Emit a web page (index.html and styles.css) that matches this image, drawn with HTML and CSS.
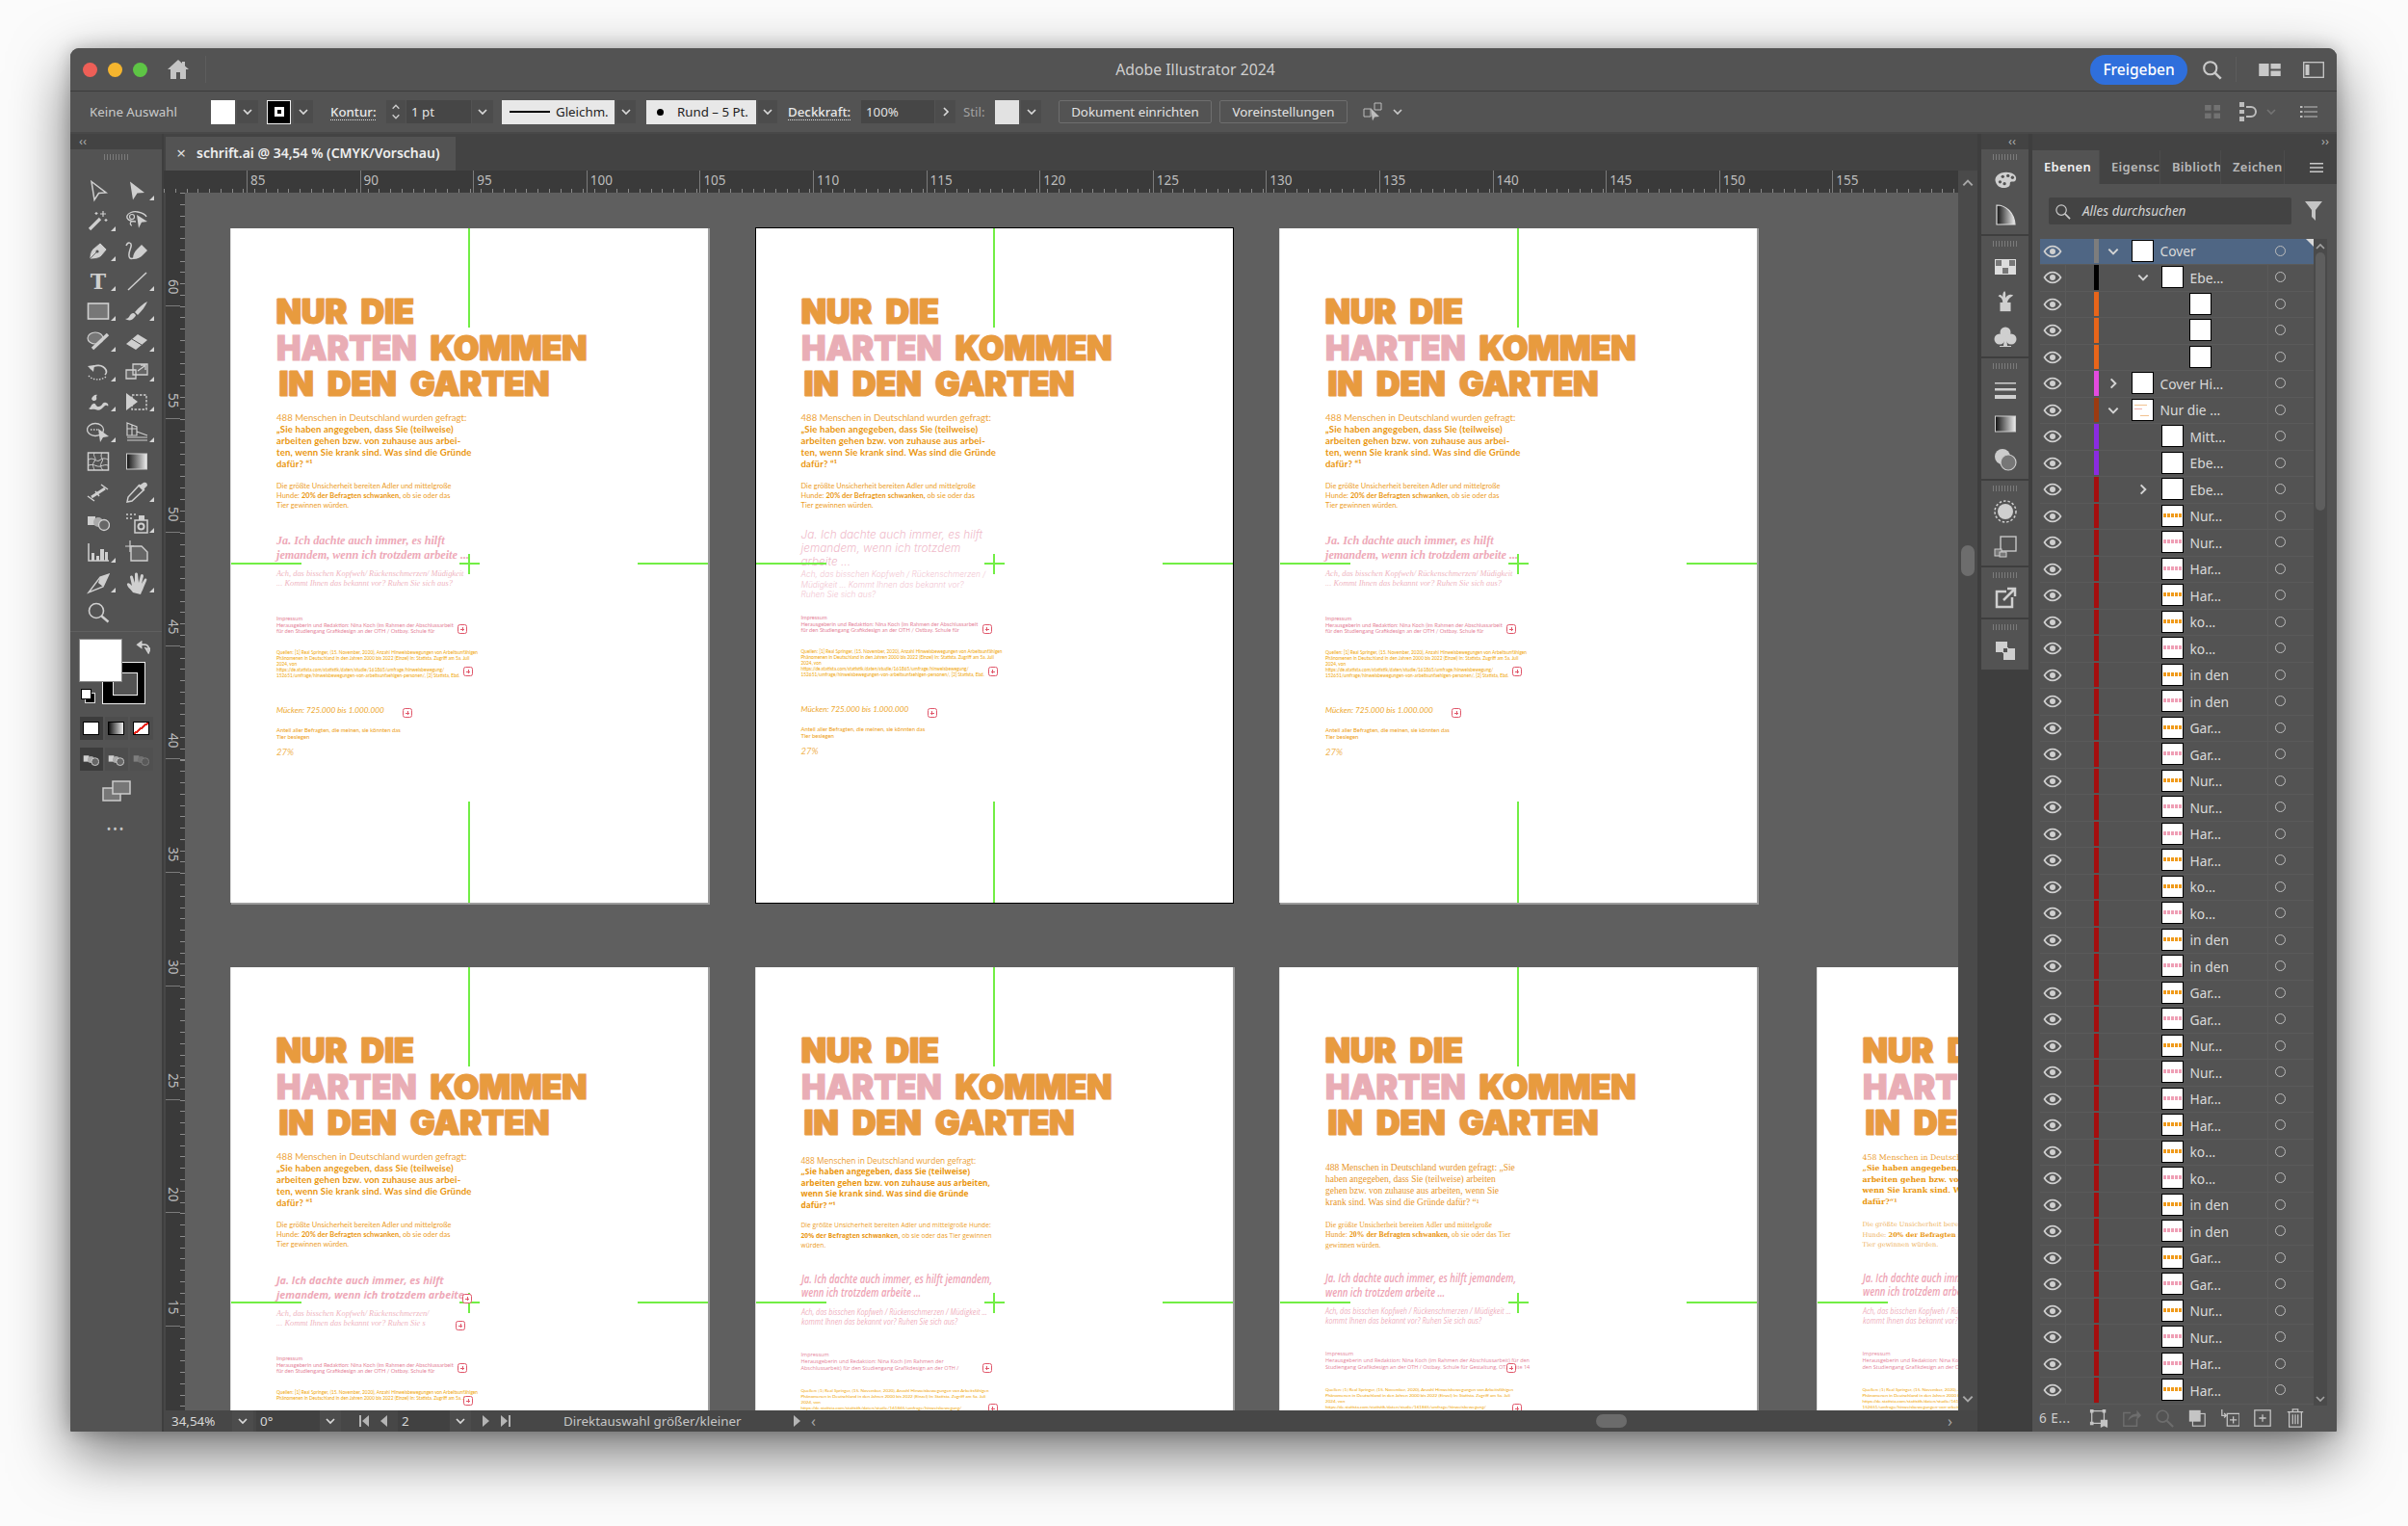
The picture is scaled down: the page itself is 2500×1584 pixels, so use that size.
FILE: index.html
```html
<!DOCTYPE html>
<html lang="de">
<head>
<meta charset="utf-8">
<title>Adobe Illustrator 2024</title>
<link rel="stylesheet" href="styles.css">
</head>
<body>
<svg class="defs" width="0" height="0" aria-hidden="true">
  <defs>
    <linearGradient id="gr"><stop offset="0" stop-color="#111"/><stop offset="1" stop-color="#eee"/></linearGradient>
    <symbol id="chev" viewBox="0 0 12 12"><path d="M2 4l4 4 4-4" fill="none" stroke="currentColor" stroke-width="1.7"/></symbol>
    <symbol id="chevr" viewBox="0 0 12 12"><path d="M4 2l4 4-4 4" fill="none" stroke="currentColor" stroke-width="1.7"/></symbol>
    <symbol id="eye" viewBox="0 0 20 14"><path d="M1.5 7C4 3 7 1.6 10 1.6S16 3 18.500 7C16 11 13 12.400 10 12.400S4 11 1.500 7z" fill="none" stroke="currentColor" stroke-width="1.7"/><circle cx="10" cy="7" r="3" fill="currentColor"/></symbol>
    <symbol id="t-sel" viewBox="0 0 24 24"><path d="M5 2.500L20 14l-7.500.5L8 21.500z" fill="none" stroke="currentColor" stroke-width="1.500"/></symbol>
    <symbol id="t-dir" viewBox="0 0 24 24"><path d="M5 2.500L20 14l-7.500.5L8 21.500z" fill="currentColor"/></symbol>
    <symbol id="t-wand" viewBox="0 0 24 24"><path d="M3 21L14 10" stroke="currentColor" stroke-width="3.200" fill="none"/><path d="M17 2v6M14 5h6M20 10v3M18.500 11.500h3M10 3v3M8.500 4.500h3" stroke="currentColor" stroke-width="1.200" fill="none"/></symbol>
    <symbol id="t-lasso" viewBox="0 0 24 24"><path d="M11 13C4 13 1 10 2 7s6-5 11-4 8 2 9 5M6 13c-1 2-1 4 1 4" fill="none" stroke="currentColor" stroke-width="1.300"/><circle cx="7" cy="8" r="2.500" fill="none" stroke="currentColor" stroke-width="1.200"/><path d="M12 6l11 7-6 .8-3 6z" fill="currentColor"/></symbol>
    <symbol id="t-pen" viewBox="0 0 24 24"><path d="M3 21c0-6 2-10 5-12l6-5 7 7-5 6c-2 3-7 4-13 4zM3 21l7-7" fill="currentColor" stroke="#535353" stroke-width=".8"/><circle cx="11" cy="13" r="1.600" fill="#535353"/></symbol>
    <symbol id="t-curv" viewBox="0 0 24 24"><path d="M1 7c2-5 6-3 5 1S2 17 5 20c2 1 4 0 5-1" fill="none" stroke="currentColor" stroke-width="1.500"/><path d="M8 21c0-5 2-8 4-10l5-5 6 6-5 5c-2 2-5 4-10 4z" fill="currentColor"/></symbol>
    <symbol id="t-line" viewBox="0 0 24 24"><path d="M3 21L22 3" stroke="currentColor" stroke-width="1.500" fill="none"/></symbol>
    <symbol id="t-rect" viewBox="0 0 24 24"><rect x="1.500" y="4" width="21" height="16" fill="#777" stroke="currentColor" stroke-width="1.600"/></symbol>
    <symbol id="t-brush" viewBox="0 0 24 24"><path d="M23 2c-4 2-9 6-13 11l3 3c4-4 8-9 10-14zM9 14c-3 0-4 2-5 4-1 1-2 2-4 2 3 2 7 2 9-1 1-1 2-2 2-3z" fill="currentColor"/></symbol>
    <symbol id="t-shaper" viewBox="0 0 24 24"><ellipse cx="9" cy="9" rx="8" ry="6" fill="#777" stroke="currentColor" stroke-width="1.200"/><path d="M6 20L22 5" stroke="currentColor" stroke-width="3.500"/></symbol>
    <symbol id="t-eraser" viewBox="0 0 24 24"><path d="M1 15L13 5l10 6-12 10z" fill="currentColor"/><path d="M7 10l10 6" stroke="#535353" stroke-width="1"/></symbol>
    <symbol id="t-rot" viewBox="0 0 24 24"><path d="M4 10c4-5 13-5 16 1 1 2 0 4-1 5" fill="none" stroke="currentColor" stroke-width="1.700"/><path d="M1 7l7-1-1 7z" fill="currentColor"/><path d="M2 17c4 5 13 5 18 1" fill="none" stroke="currentColor" stroke-width="1.400" stroke-dasharray="1.500 1.500"/></symbol>
    <symbol id="t-scale" viewBox="0 0 24 24"><path d="M8 5h15v11H8zM1 11h10v9H1z" fill="#666" stroke="currentColor" stroke-width="1.300"/><path d="M13 12l7-5M16 6h5v5" fill="none" stroke="currentColor" stroke-width="1.300"/></symbol>
    <symbol id="t-warp" viewBox="0 0 24 24"><path d="M2 19c3-1 2-4 5-5s2 4 6 3 3-5 7-4c2 .5 3 2 2 4-1-2-3-1-4 0-3 3-5 5-9 3-3-1-4 1-7-1zM5 9c1-3 4-5 6-4-2 1 0 3-1 5-2 2-4 1-5-1z" fill="currentColor"/></symbol>
    <symbol id="t-free" viewBox="0 0 24 24"><rect x="7" y="5" width="15" height="15" fill="none" stroke="currentColor" stroke-width="1.400" stroke-dasharray="2.500 1.500"/><path d="M1 3l12 9-12 9z" fill="currentColor"/></symbol>
    <symbol id="t-build" viewBox="0 0 24 24"><ellipse cx="9" cy="10" rx="8.500" ry="6.500" fill="none" stroke="currentColor" stroke-width="1.300"/><path d="M4 10h9" stroke="currentColor" stroke-width="1.300" stroke-dasharray="1.500 1.500"/><path d="M12 9l11 8-6 1-3 5z" fill="currentColor"/></symbol>
    <symbol id="t-persp" viewBox="0 0 24 24"><path d="M2 3l10 4v9H2zM2 9h10M7 5v11M12 12l11 4M2 18h21M2 21h21" fill="none" stroke="currentColor" stroke-width="1.200"/></symbol>
    <symbol id="t-mesh" viewBox="0 0 24 24"><rect x="1.500" y="3" width="21" height="18" fill="none" stroke="currentColor" stroke-width="1.500"/><path d="M8 3c-2 4 3 5 0 9s-1 5 0 9M16 3c-3 5 2 6 0 9s-2 6 1 9M2 10c5-3 8 3 11 1s5-3 9-1M2 16c6-2 8 2 12 1s5-2 8-1" fill="none" stroke="currentColor" stroke-width="1"/></symbol>
    <symbol id="t-grad" viewBox="0 0 24 24"><rect x="1.500" y="4" width="21" height="16" fill="url(#gr)" stroke="#ccc" stroke-width="1"/></symbol>
    <symbol id="t-meas" viewBox="0 0 24 24"><path d="M5 17L19 8" stroke="currentColor" stroke-width="2.800"/><path d="M1 16l7 5M15 4l7 5M9 11l4 5" stroke="currentColor" stroke-width="1.500" fill="none"/></symbol>
    <symbol id="t-drop" viewBox="0 0 24 24"><path d="M15 4l-12 13-1 5 5-1L20 9" fill="none" stroke="currentColor" stroke-width="1.500"/><path d="M13 5l6 6 1-3 3-3c0-3-2-4-4-3l-3 2z" fill="currentColor"/></symbol>
    <symbol id="t-blend" viewBox="0 0 24 24"><rect x="1" y="6" width="8" height="9" fill="currentColor"/><circle cx="12" cy="12" r="5" fill="#aaa"/><circle cx="18" cy="15" r="5.500" fill="#666" stroke="currentColor" stroke-width="1.300"/></symbol>
    <symbol id="t-spray" viewBox="0 0 24 24"><path d="M1 4h2M5 4h2M9 4h2M1 8h2M5 8h2" stroke="currentColor" stroke-width="1.600"/><path d="M10 10h13v13H10z" fill="none" stroke="currentColor" stroke-width="1.500"/><rect x="14" y="5" width="6" height="5" fill="currentColor"/><circle cx="16.500" cy="16.500" r="3" fill="none" stroke="currentColor" stroke-width="2"/></symbol>
    <symbol id="t-graph" viewBox="0 0 24 24"><path d="M2 3v18h21" fill="none" stroke="currentColor" stroke-width="1.500"/><path d="M5 13h3v8H5zM10 16h3v5h-3zM14 9h4v12h-4zM19 12h3v9h-3z" fill="currentColor"/></symbol>
    <symbol id="t-board" viewBox="0 0 24 24"><path d="M0 6h9M5 0v12" stroke="currentColor" stroke-width="1.200"/><path d="M6 6h11l6 6v9H6z" fill="#666" stroke="currentColor" stroke-width="1.400"/></symbol>
    <symbol id="t-slice" viewBox="0 0 24 24"><path d="M2 22L14 6l9-3-6 13z" fill="none" stroke="currentColor" stroke-width="1.400"/><path d="M14 6l9-3-6 13-5-4z" fill="currentColor"/></symbol>
    <symbol id="t-hand" viewBox="0 0 24 24"><path d="M8 22c-2-3-7-7-6-9s4 1 5 2L5 6c0-2 3-2 3 0l2 6V3c0-2 3-2 3 0l1 9 2-8c1-2 3-1 3 1l-2 8 3-5c2-1 3 0 2 2l-3 7c-1 3-2 4-3 7z" fill="currentColor"/></symbol>
    <symbol id="t-zoom" viewBox="0 0 24 24"><circle cx="10" cy="10" r="7.500" fill="none" stroke="currentColor" stroke-width="1.600"/><path d="M15.500 15.500l7 6" stroke="currentColor" stroke-width="2.400"/></symbol>
    <symbol id="d-pal" viewBox="0 0 26 24"><path d="M2 14C0 8 6 3 14 3c6 0 12 3 11 8-1 4-4 2-6 3s1 5-4 6c-6 2-11 0-13-6z" fill="currentColor"/><circle cx="7" cy="14" r="1.800" fill="#535353"/><circle cx="10" cy="8" r="1.800" fill="#535353"/><circle cx="16" cy="7" r="1.800" fill="#535353"/><circle cx="21" cy="9" r="1.800" fill="#535353"/><circle cx="12" cy="16" r="1.800" fill="#535353"/></symbol>
    <symbol id="d-guide" viewBox="0 0 24 24"><path d="M3 2c10 0 18 8 19 20H3z" fill="url(#gr)" stroke="#ddd" stroke-width="1.200"/></symbol>
    <symbol id="d-sw" viewBox="0 0 24 24"><rect x="1" y="4" width="22" height="16" fill="#ddd"/><path d="M2 5h6v6H2zM16 5h6v6h-6zM9 13h6v6H9z" fill="#777"/></symbol>
    <symbol id="d-br" viewBox="0 0 24 26"><path d="M6 14h12v10H6z" fill="currentColor"/><path d="M9 14C9 9 6 8 4 7c2-3 4-1 5 1 0-3 0-5 2-7 2 2 1 5 1 8 2-3 5-5 9-3-3 2-6 4-7 8z" fill="currentColor"/></symbol>
    <symbol id="d-club" viewBox="0 0 24 24"><circle cx="12" cy="7" r="5.500" fill="currentColor"/><circle cx="6" cy="14" r="5.500" fill="currentColor"/><circle cx="18" cy="14" r="5.500" fill="currentColor"/><path d="M11 12h2l1 9h4v1H6v-1h4z" fill="currentColor"/></symbol>
    <symbol id="d-stroke" viewBox="0 0 24 24"><path d="M1 5h22v1.500H1zM1 11h22v2.500H1zM1 18h22v4H1z" fill="currentColor"/></symbol>
    <symbol id="d-trans" viewBox="0 0 24 24"><circle cx="9" cy="9" r="8" fill="#ccc"/><circle cx="15" cy="15" r="8" fill="#777" stroke="#ccc" stroke-width="1.200"/></symbol>
    <symbol id="d-app" viewBox="0 0 24 24"><circle cx="12" cy="12" r="8" fill="currentColor"/><circle cx="12" cy="12" r="11" fill="none" stroke="currentColor" stroke-width="1.500" stroke-dasharray="2.500 2"/></symbol>
    <symbol id="d-style" viewBox="0 0 24 24"><rect x="7" y="2" width="16" height="15" fill="none" stroke="currentColor" stroke-width="1.300"/><rect x="1" y="15" width="7" height="7" fill="#777" stroke="currentColor"/><rect x="6" y="18" width="7" height="5" fill="#777" stroke="currentColor"/></symbol>
    <symbol id="d-exp" viewBox="0 0 24 24"><path d="M13 5H3v16h16V11" fill="none" stroke="currentColor" stroke-width="2.500"/><path d="M10 14L21 3M14 2h8v8" fill="none" stroke="currentColor" stroke-width="2.500"/></symbol>
    <symbol id="d-path" viewBox="0 0 24 24"><rect x="2" y="3" width="12" height="11" fill="currentColor"/><rect x="10" y="10" width="12" height="12" fill="currentColor"/><rect x="9.500" y="9.500" width="5" height="5" fill="#535353" stroke="#ccc"/></symbol>
  </defs>
</svg>

<main class="win">
  <header class="title">
    <i class="light red"></i><i class="light yel"></i><i class="light grn"></i>
    <svg class="home" viewBox="0 0 24 22"><path d="M12 1L1 11h3v10h6v-7h4v7h6V11h3l-4-3.600V3h-3v1.700z" fill="currentColor"/></svg>
    <i class="tdiv"></i>
    <div class="apptitle">Adobe Illustrator 2024</div>
    <button class="share">Freigeben</button>
    <svg class="ticon search" viewBox="0 0 24 24"><circle cx="10" cy="10" r="7.500" fill="none" stroke="currentColor" stroke-width="2.400"/><path d="M15.500 15.500l7 7" stroke="currentColor" stroke-width="3"/></svg>
    <i class="tdiv2"></i>
    <svg class="ticon wide" viewBox="0 0 24 16"><path d="M0 1h11v14H0zM13 1h11v6H13zM13 9h11v6H13z" fill="currentColor"/></svg>
    <svg class="ticon wide2" viewBox="0 0 22 17"><rect x=".7" y=".7" width="20.600" height="15.600" fill="none" stroke="currentColor" stroke-width="1.300"/><path d="M2.500 3h4v11h-4z" fill="currentColor"/></svg>
  </header>

  <section class="ctrl">
    <span class="lbl first">Keine Auswahl</span>
    <i class="swatch m34"></i><button class="dd m2 w22"><svg><use href="#chev"/></svg></button>
    <i class="swatch stroke-sw m9"></i><button class="dd m3 w20"><svg><use href="#chev"/></svg></button>
    <span class="lbl uline m18 w47">Kontur:</span>
    <span class="stepper m11"><svg><use href="#chev"/></svg><svg><use href="#chev"/></svg></span>
    <span class="field m1 w67">1 pt</span><button class="dd m1 w22"><svg><use href="#chev"/></svg></button>
    <span class="light-dd m9 w117"><i class="pline"></i>Gleichm.</span><button class="dd m2 w20"><svg><use href="#chev"/></svg></button>
    <span class="light-dd m11 w114"><i class="pdot"></i>Rund – 5 Pt.</span><button class="dd m2 w20"><svg><use href="#chev"/></svg></button>
    <span class="lbl uline m11 w65">Deckkraft:</span>
    <span class="field m11 w76">100%</span><button class="dd m1 w21"><svg><use href="#chevr"/></svg></button>
    <span class="lbl dim m8 w24">Stil:</span>
    <i class="swatch grey m9"></i><button class="dd m2 w21"><svg><use href="#chev"/></svg></button>
    <button class="btn m18 w159">Dokument einrichten</button>
    <button class="btn m8 w133">Voreinstellungen</button>
    <svg class="cicon m16" viewBox="0 0 20 20"><path d="M1 7h7v8H1zM12 1h7v7h-7z" fill="none" stroke="currentColor"/><path d="M8 6l9 9-5 .5-2 4z" fill="currentColor"/></svg>
    <span class="cchev m4"><svg><use href="#chev"/></svg></span>
    <svg class="cicon dimi right" viewBox="0 0 18 16"><path d="M0 0h7v6H0zM10 0h7v6h-7zM0 9h7v6H0zM10 9h7v6h-7z" fill="currentColor"/></svg>
    <svg class="cicon m18" viewBox="0 0 20 20"><path d="M1 0h5v5H1zM1 8h5v4H1zM1 15h5v5H1z" fill="currentColor"/><path d="M8 5h5a5 5 0 010 10H8" fill="none" stroke="currentColor" stroke-width="2"/></svg>
    <span class="cchev dimc m8"><svg><use href="#chev"/></svg></span>
    <svg class="cicon m24 w18" viewBox="0 0 18 16"><path d="M0 2h2.500v2H0zM0 7h2.500v2H0zM0 12h2.500v2H0zM4 2.500h14v1H4zM4 7.500h14v1H4zM4 12.500h14v1H4z" fill="currentColor"/></svg>
  </section>

  <div class="work">
    <aside class="tools">
      <div class="head"><span class="col">‹‹</span></div>
      <div class="grip"></div>
      <div class="tgrid">
        <span class="tool"><svg><use href="#t-sel"/></svg></span>
        <span class="tool fly"><svg><use href="#t-dir"/></svg></span>
        <span class="tool fly"><svg><use href="#t-wand"/></svg></span>
        <span class="tool"><svg><use href="#t-lasso"/></svg></span>
        <span class="tool fly"><svg><use href="#t-pen"/></svg></span>
        <span class="tool"><svg><use href="#t-curv"/></svg></span>
        <span class="tool fly ttype">T</span>
        <span class="tool fly"><svg><use href="#t-line"/></svg></span>
        <span class="tool fly"><svg><use href="#t-rect"/></svg></span>
        <span class="tool fly"><svg><use href="#t-brush"/></svg></span>
        <span class="tool fly"><svg><use href="#t-shaper"/></svg></span>
        <span class="tool fly"><svg><use href="#t-eraser"/></svg></span>
        <span class="tool fly"><svg><use href="#t-rot"/></svg></span>
        <span class="tool fly"><svg><use href="#t-scale"/></svg></span>
        <span class="tool fly"><svg><use href="#t-warp"/></svg></span>
        <span class="tool fly"><svg><use href="#t-free"/></svg></span>
        <span class="tool fly"><svg><use href="#t-build"/></svg></span>
        <span class="tool fly"><svg><use href="#t-persp"/></svg></span>
        <span class="tool"><svg><use href="#t-mesh"/></svg></span>
        <span class="tool"><svg><use href="#t-grad"/></svg></span>
        <span class="tool"><svg><use href="#t-meas"/></svg></span>
        <span class="tool fly"><svg><use href="#t-drop"/></svg></span>
        <span class="tool"><svg><use href="#t-blend"/></svg></span>
        <span class="tool fly"><svg><use href="#t-spray"/></svg></span>
        <span class="tool fly"><svg><use href="#t-graph"/></svg></span>
        <span class="tool"><svg><use href="#t-board"/></svg></span>
        <span class="tool fly"><svg><use href="#t-slice"/></svg></span>
        <span class="tool fly"><svg><use href="#t-hand"/></svg></span>
        <span class="tool"><svg><use href="#t-zoom"/></svg></span>
      </div>
      <div class="fs">
        <i class="fs-stroke"></i>
        <i class="fs-fill"></i>
        <svg class="fs-swap" viewBox="0 0 16 14"><path d="M2 4h8a4 4 0 014 5M2 4l4-3v6zM14 9l-3-1 3 5 2-5z" fill="none" stroke="currentColor" stroke-width="1.800"/></svg>
        <i class="fs-def"></i>
      </div>
      <div class="modes"><span class="mb on"><i class="mw"></i></span><span class="mb"><i class="mg"></i></span><span class="mb"><i class="mn"></i></span></div>
      <div class="modes draw"><span class="mb on"><svg><use href="#t-blend"/></svg></span><span class="mb"><svg><use href="#t-blend"/></svg></span><span class="mb off"><svg><use href="#t-blend"/></svg></span></div>
      <svg class="screen" viewBox="0 0 30 22"><rect x="1" y="8" width="18" height="13" fill="#777" stroke="#ccc" stroke-width="1.500"/><rect x="11" y="1" width="18" height="13" fill="#777" stroke="#ccc" stroke-width="1.500"/></svg>
      <div class="more">•••</div>
    </aside>

    <div class="doc">
      <div class="tabbar"><div class="tab"><span class="x">×</span>schrift.ai @ 34,54 % (CMYK/Vorschau)</div></div>
      <div class="docbody">
        <div class="docmain">
          <div class="hruler"><span>85</span><span>90</span><span>95</span><span>100</span><span>105</span><span>110</span><span>115</span><span>120</span><span>125</span><span>130</span><span>135</span><span>140</span><span>145</span><span>150</span><span>155</span></div>
          <div class="docrow">
            <div class="vruler"><span>60</span><span>55</span><span>50</span><span>45</span><span>40</span><span>35</span><span>30</span><span>25</span><span>20</span><span>15</span><span>10</span></div>
            <div class="canvas">

              <article class="ab fa">
                <div class="hd"><div>NUR DIE</div><div><span class="pk">HARTEN</span> KOMMEN</div><div class="in">IN DEN GARTEN</div></div>
                <p class="q">488 Menschen in Deutschland wurden gefragt:<br><b>„Sie haben angegeben, dass Sie (teilweise)<br>arbeiten gehen bzw. von zuhause aus arbei-<br>ten, wenn Sie krank sind. Was sind die Gründe<br>dafür? “¹</b></p>
                <p class="p2">Die größte Unsicherheit bereiten Adler und mittelgroße<br>Hunde: <b>20% der Befragten schwanken,</b> ob sie oder das<br>Tier gewinnen würden.</p>
                <p class="ja">Ja. Ich dachte auch immer, es hilft<br>jemandem, wenn ich trotzdem arbeite ...</p>
                <p class="ach">Ach, das bisschen Kopfweh/ Rückenschmerzen/ Müdigkeit<br>... Kommt Ihnen das bekannt vor? Ruhen Sie sich aus?</p>
                <p class="imp">Impressum<br>Herausgeberin und Redaktion: Nina Koch (im Rahmen der Abschlussarbeit<br>für den Studiengang Grafikdesign an der OTH / Ostbay. Schule für</p>
                <p class="src">Quellen: [1] Real Springer, (15. November, 2020), Anzahl Hinweisbewegungen von Arbeitsunfähigen<br>Phänomenen in Deutschland in den Jahren 2000 bis 2022 (Einzel) In: Statista. Zugriff am 5a. Juli<br>2024, von<br>https://de.statista.com/statistik/daten/studie/161865/umfrage/hinweisbewegung/<br>152651/umfrage/hinweisbewegungen-von-arbeitsunfaehigen-personen/, [2] Statista, Ebd.</p>
                <p class="mk">Mücken: 725.000 bis 1.000.000</p>
                <p class="an">Anteil aller Befragten, die meinen, sie könnten das<br>Tier besiegen</p>
                <p class="pc">27%</p>
                <i class="ov o1"></i><i class="ov o2"></i><i class="ov o3"></i>
              </article>

              <article class="ab fa active fb">
                <div class="hd"><div>NUR DIE</div><div><span class="pk">HARTEN</span> KOMMEN</div><div class="in">IN DEN GARTEN</div></div>
                <p class="q">488 Menschen in Deutschland wurden gefragt:<br><b>„Sie haben angegeben, dass Sie (teilweise)<br>arbeiten gehen bzw. von zuhause aus arbei-<br>ten, wenn Sie krank sind. Was sind die Gründe<br>dafür? “¹</b></p>
                <p class="p2">Die größte Unsicherheit bereiten Adler und mittelgroße<br>Hunde: <b>20% der Befragten schwanken,</b> ob sie oder das<br>Tier gewinnen würden.</p>
                <p class="ja">Ja. Ich dachte auch immer, es hilft<br>jemandem, wenn ich trotzdem<br>arbeite ...</p>
                <p class="ach">Ach, das bisschen Kopfweh / Rückenschmerzen /<br>Müdigkeit ... Kommt Ihnen das bekannt vor?<br>Ruhen Sie sich aus?</p>
                <p class="imp">Impressum<br>Herausgeberin und Redaktion: Nina Koch (im Rahmen der Abschlussarbeit<br>für den Studiengang Grafikdesign an der OTH / Ostbay. Schule für</p>
                <p class="src">Quellen: [1] Real Springer, (15. November, 2020), Anzahl Hinweisbewegungen von Arbeitsunfähigen<br>Phänomenen in Deutschland in den Jahren 2000 bis 2022 (Einzel) In: Statista. Zugriff am 5a. Juli<br>2024, von<br>https://de.statista.com/statistik/daten/studie/161865/umfrage/hinweisbewegung/<br>152651/umfrage/hinweisbewegungen-von-arbeitsunfaehigen-personen/, [2] Statista, Ebd.</p>
                <p class="mk">Mücken: 725.000 bis 1.000.000</p>
                <p class="an">Anteil aller Befragten, die meinen, sie könnten das<br>Tier besiegen</p>
                <p class="pc">27%</p>
                <i class="ov o1"></i><i class="ov o2"></i><i class="ov o3"></i>
              </article>

              <article class="ab fa">
                <div class="hd"><div>NUR DIE</div><div><span class="pk">HARTEN</span> KOMMEN</div><div class="in">IN DEN GARTEN</div></div>
                <p class="q">488 Menschen in Deutschland wurden gefragt:<br><b>„Sie haben angegeben, dass Sie (teilweise)<br>arbeiten gehen bzw. von zuhause aus arbei-<br>ten, wenn Sie krank sind. Was sind die Gründe<br>dafür? “¹</b></p>
                <p class="p2">Die größte Unsicherheit bereiten Adler und mittelgroße<br>Hunde: <b>20% der Befragten schwanken,</b> ob sie oder das<br>Tier gewinnen würden.</p>
                <p class="ja">Ja. Ich dachte auch immer, es hilft<br>jemandem, wenn ich trotzdem arbeite ...</p>
                <p class="ach">Ach, das bisschen Kopfweh/ Rückenschmerzen/ Müdigkeit<br>... Kommt Ihnen das bekannt vor? Ruhen Sie sich aus?</p>
                <p class="imp">Impressum<br>Herausgeberin und Redaktion: Nina Koch (im Rahmen der Abschlussarbeit<br>für den Studiengang Grafikdesign an der OTH / Ostbay. Schule für</p>
                <p class="src">Quellen: [1] Real Springer, (15. November, 2020), Anzahl Hinweisbewegungen von Arbeitsunfähigen<br>Phänomenen in Deutschland in den Jahren 2000 bis 2022 (Einzel) In: Statista. Zugriff am 5a. Juli<br>2024, von<br>https://de.statista.com/statistik/daten/studie/161865/umfrage/hinweisbewegung/<br>152651/umfrage/hinweisbewegungen-von-arbeitsunfaehigen-personen/, [2] Statista, Ebd.</p>
                <p class="mk">Mücken: 725.000 bis 1.000.000</p>
                <p class="an">Anteil aller Befragten, die meinen, sie könnten das<br>Tier besiegen</p>
                <p class="pc">27%</p>
                <i class="ov o1"></i><i class="ov o2"></i><i class="ov o3"></i>
              </article>
              <div class="spacer"></div>

              <article class="ab fa fd">
                <div class="hd"><div>NUR DIE</div><div><span class="pk">HARTEN</span> KOMMEN</div><div class="in">IN DEN GARTEN</div></div>
                <p class="q">488 Menschen in Deutschland wurden gefragt:<br><b>„Sie haben angegeben, dass Sie (teilweise)<br>arbeiten gehen bzw. von zuhause aus arbei-<br>ten, wenn Sie krank sind. Was sind die Gründe<br>dafür? “¹</b></p>
                <p class="p2">Die größte Unsicherheit bereiten Adler und mittelgroße<br>Hunde: <b>20% der Befragten schwanken,</b> ob sie oder das<br>Tier gewinnen würden.</p>
                <p class="ja">Ja. Ich dachte auch immer, es hilft<br>jemandem, wenn ich trotzdem arbeite</p>
                <p class="ach">Ach, das bisschen Kopfweh/ Rückenschmerzen/<br>... Kommt Ihnen das bekannt vor? Ruhen Sie s</p>
                <p class="imp">Impressum<br>Herausgeberin und Redaktion: Nina Koch (im Rahmen der Abschlussarbeit<br>für den Studiengang Grafikdesign an der OTH / Ostbay. Schule für</p>
                <p class="src">Quellen: [1] Real Springer, (15. November, 2020), Anzahl Hinweisbewegungen von Arbeitsunfähigen<br>Phänomenen in Deutschland in den Jahren 2000 bis 2022 (Einzel) In: Statista. Zugriff am 5a. Juli</p>
                <i class="ov o5"></i><i class="ov o6"></i><i class="ov o1"></i><i class="ov o7"></i>
              </article>

              <article class="ab fc">
                <div class="hd"><div>NUR DIE</div><div><span class="pk">HARTEN</span> KOMMEN</div><div class="in">IN DEN GARTEN</div></div>
                <p class="q">488 Menschen in Deutschland wurden gefragt:<br><b>„Sie haben angegeben, dass Sie (teilweise)<br>arbeiten gehen bzw. von zuhause aus arbeiten,<br>wenn Sie krank sind. Was sind die Gründe<br>dafür? “¹</b></p>
                <p class="p2">Die größte Unsicherheit bereiten Adler und mittelgroße Hunde:<br><b>20% der Befragten schwanken,</b> ob sie oder das Tier gewinnen<br>würden.</p>
                <p class="ja">Ja. Ich dachte auch immer, es hilft jemandem,<br>wenn ich trotzdem arbeite ...</p>
                <p class="ach">Ach, das bisschen Kopfweh / Rückenschmerzen / Müdigkeit ...<br>kommt Ihnen das bekannt vor? Ruhen Sie sich aus?</p>
                <p class="imp">Impressum<br>Herausgeberin und Redaktion: Nina Koch (im Rahmen der<br>Abschlussarbeit) für den Studiengang Grafikdesign an der OTH /</p>
                <p class="src">Quellen: [1] Real Springer, (15. November, 2020), Anzahl Hinweisbewegungen von Arbeitsfähigen<br>Phänomenen in Deutschland in den Jahren 2000 bis 2022 (Einzel) In: Statista. Zugriff am 5a. Juli<br>2024, von<br>https://de.statista.com/statistik/daten/studie/161865/umfrage/hinweisbewegung/</p>
                <i class="ov o1"></i><i class="ov o4"></i>
              </article>

              <article class="ab fe">
                <div class="hd"><div>NUR DIE</div><div><span class="pk">HARTEN</span> KOMMEN</div><div class="in">IN DEN GARTEN</div></div>
                <p class="q">488 Menschen in Deutschland wurden gefragt: „Sie<br>haben angegeben, dass Sie (teilweise) arbeiten<br>gehen bzw. von zuhause aus arbeiten, wenn Sie<br>krank sind. Was sind die Gründe dafür? “¹</p>
                <p class="p2">Die größte Unsicherheit bereiten Adler und mittelgroße<br>Hunde: <b>20% der Befragten schwanken,</b> ob sie oder das Tier<br>gewinnen würden.</p>
                <p class="ja">Ja. Ich dachte auch immer, es hilft jemandem,<br>wenn ich trotzdem arbeite ...</p>
                <p class="ach">Ach, das bisschen Kopfweh / Rückenschmerzen / Müdigkeit ...<br>kommt Ihnen das bekannt vor? Ruhen Sie sich aus?</p>
                <p class="imp">Impressum<br>Herausgeberin und Redaktion: Nina Koch (im Rahmen der Abschlussarbeit) für den<br>Studiengang Grafikdesign an der OTH / Ostbay. Schule für Gestaltung, OTZ Seite 14</p>
                <p class="src">Quellen: [1] Real Springer, (15. November, 2020), Anzahl Hinweisbewegungen von Arbeitsfähigen<br>Phänomenen in Deutschland in den Jahren 2000 bis 2022 (Einzel) In: Statista. Zugriff am 5a. Juli<br>2024, von<br>https://de.statista.com/statistik/daten/studie/161865/umfrage/hinweisbewegung/</p>
                <i class="ov o1"></i><i class="ov o4"></i>
              </article>

              <article class="ab fg shift">
                <div class="hd"><div>NUR DIE</div><div><span class="pk">HARTEN</span> KOMMEN</div><div class="in">IN DEN GARTEN</div></div>
                <p class="q">458 Menschen in Deutschland wurden gefragt:<br><b>„Sie haben angegeben, dass Sie (teilweise)<br>arbeiten gehen bzw. von zuhause aus arbeiten,<br>wenn Sie krank sind. Was sind die Gründe<br>dafür?“¹</b></p>
                <p class="p2">Die größte Unsicherheit bereiten Adler und mittelgroße<br>Hunde: <b>20% der Befragten schwanken,</b> ob sie oder das<br>Tier gewinnen würden.</p>
                <p class="ja">Ja. Ich dachte auch immer, es hilft jemandem,<br>wenn ich trotzdem arbeite ...</p>
                <p class="ach">Ach, das bisschen Kopfweh / Rückenschmerzen / Müdigkeit ...<br>kommt Ihnen das bekannt vor? Ruhen Sie sich aus?</p>
                <p class="imp">Impressum<br>Herausgeberin und Redaktion: Nina Koch (im Rahmen der Abschlussarbeit)<br>den Studiengang Grafikdesign an der OTH / Ostbay. Schule für Gestaltung</p>
                <p class="src">Quellen: [1] Real Springer, (15. November, 2020), Anzahl Hinweisbewegungen von Arbeitsfähigen<br>Phänomenen in Deutschland in den Jahren 2000 bis 2022 (Einzel) In: Statista. Zugriff am 5a. Juli<br>https://de.statista.com/statistik/daten/studie/161865/umfrage/hinweisbewegung/<br>152651/umfrage/hinweisbewegungen-von-arbeitsunfaehigen-personen/</p>
              </article>

            </div>
          </div>
        </div>
        <div class="vscroll">
          <svg class="sa"><use href="#chev" transform="rotate(180 7 7)"/></svg>
          <i class="vthumb"></i>
          <svg class="sa sb"><use href="#chev"/></svg>
        </div>
      </div>
      <footer class="status">
        <span class="sval w-z">34,54%</span><button class="dd s-dd"><svg><use href="#chev"/></svg></button>
        <span class="sfield w-a">0°</span><button class="dd s-dd"><svg><use href="#chev"/></svg></button>
        <svg class="nav first-n" viewBox="0 0 12 14"><path d="M1 1h2v12H1zM11 1v12L4 7z" fill="currentColor"/></svg>
        <svg class="nav" viewBox="0 0 12 14"><path d="M9 1v12L2 7z" fill="currentColor"/></svg>
        <span class="sfield w-n">2</span><button class="dd s-dd"><svg><use href="#chev"/></svg></button>
        <svg class="nav" viewBox="0 0 12 14"><path d="M3 1v12l7-6z" fill="currentColor"/></svg>
        <svg class="nav" viewBox="0 0 12 14"><path d="M1 1v12l7-6zM9 1h2v12H9z" fill="currentColor"/></svg>
        <span class="stext">Direktauswahl größer/kleiner</span>
        <svg class="nav m-sa" viewBox="0 0 12 14"><path d="M3 1v12l7-6z" fill="currentColor"/></svg>
        <div class="hscroll"><span class="ha">‹</span><i class="hthumb"></i><span class="ha">›</span></div>
      </footer>
    </div>

    <aside class="dock">
      <div class="head right-h"><span class="col">‹‹</span></div>
      <div class="dgroup g1"><div class="grip"></div><svg class="dic"><use href="#d-pal"/></svg><svg class="dic"><use href="#d-guide"/></svg></div>
      <div class="dgroup g2"><div class="grip"></div><svg class="dic"><use href="#d-sw"/></svg><svg class="dic"><use href="#d-br"/></svg><svg class="dic"><use href="#d-club"/></svg></div>
      <div class="dgroup g2"><div class="grip"></div><svg class="dic"><use href="#d-stroke"/></svg><svg class="dic"><use href="#t-grad"/></svg><svg class="dic"><use href="#d-trans"/></svg></div>
      <div class="dgroup g3"><div class="grip"></div><svg class="dic"><use href="#d-app"/></svg><svg class="dic"><use href="#d-style"/></svg></div>
      <div class="dgroup g4"><div class="grip"></div><svg class="dic"><use href="#d-exp"/></svg></div>
      <div class="dgroup g4"><div class="grip"></div><svg class="dic"><use href="#d-path"/></svg></div>
    </aside>

    <aside class="panel">
      <div class="head ph"><span class="col">››</span></div>
      <div class="ptabs">
        <span class="ptab on">Ebenen</span><span class="ptab">Eigensc</span><span class="ptab">Biblioth</span><span class="ptab clip">Zeichen</span>
        <svg class="pmenu" viewBox="0 0 14 10"><path d="M0 0h14v1.500H0zM0 4.200h14v1.500H0zM0 8.500h14V10H0z" fill="currentColor"/></svg>
      </div>
      <div class="psearch">
        <div class="sbox"><svg viewBox="0 0 18 18"><circle cx="7.500" cy="7.500" r="5.500" fill="none" stroke="currentColor" stroke-width="1.300"/><path d="M11.500 11.500l5.500 5.500" stroke="currentColor" stroke-width="1.800"/></svg><em>Alles durchsuchen</em></div>
        <svg class="filter" viewBox="0 0 18 20"><path d="M0 0h18l-7 9v11l-4-4V9z" fill="currentColor"/></svg>
      </div>
      <div class="layers">
        <ul class="list">
          <li class="row sel"><svg class="eye"><use href="#eye"/></svg><i class="bar grey"></i><span class="ct l0"><svg class="tw"><use href="#chev"/></svg><b class="th"></b>Cover</span><i class="tg"></i></li>
          <li class="row"><svg class="eye"><use href="#eye"/></svg><i class="bar blk"></i><span class="ct l1"><svg class="tw"><use href="#chev"/></svg><b class="th"></b>Ebe...</span><i class="tg"></i></li>
          <li class="row"><svg class="eye"><use href="#eye"/></svg><i class="bar org"></i><span class="ct l2"><i class="tw"></i><b class="th"></b></span><i class="tg"></i></li>
          <li class="row"><svg class="eye"><use href="#eye"/></svg><i class="bar org"></i><span class="ct l2"><i class="tw"></i><b class="th"></b></span><i class="tg"></i></li>
          <li class="row"><svg class="eye"><use href="#eye"/></svg><i class="bar org"></i><span class="ct l2"><i class="tw"></i><b class="th"></b></span><i class="tg"></i></li>
          <li class="row"><svg class="eye"><use href="#eye"/></svg><i class="bar mag"></i><span class="ct l0"><svg class="tw"><use href="#chevr"/></svg><b class="th"></b>Cover Hi...</span><i class="tg"></i></li>
          <li class="row"><svg class="eye"><use href="#eye"/></svg><i class="bar brn"></i><span class="ct l0"><svg class="tw"><use href="#chev"/></svg><b class="th m"></b>Nur die ...</span><i class="tg"></i></li>
          <li class="row"><svg class="eye"><use href="#eye"/></svg><i class="bar pur"></i><span class="ct l1"><i class="tw"></i><b class="th"></b>Mitt...</span><i class="tg"></i></li>
          <li class="row"><svg class="eye"><use href="#eye"/></svg><i class="bar pur"></i><span class="ct l1"><i class="tw"></i><b class="th"></b>Ebe...</span><i class="tg"></i></li>
          <li class="row"><svg class="eye"><use href="#eye"/></svg><i class="bar red"></i><span class="ct l1"><svg class="tw"><use href="#chevr"/></svg><b class="th"></b>Ebe...</span><i class="tg"></i></li>
          <li class="row"><svg class="eye"><use href="#eye"/></svg><i class="bar red"></i><span class="ct l1"><i class="tw"></i><b class="th o"></b>Nur...</span><i class="tg"></i></li>
          <li class="row"><svg class="eye"><use href="#eye"/></svg><i class="bar red"></i><span class="ct l1"><i class="tw"></i><b class="th p"></b>Nur...</span><i class="tg"></i></li>
          <li class="row"><svg class="eye"><use href="#eye"/></svg><i class="bar red"></i><span class="ct l1"><i class="tw"></i><b class="th p"></b>Har...</span><i class="tg"></i></li>
          <li class="row"><svg class="eye"><use href="#eye"/></svg><i class="bar red"></i><span class="ct l1"><i class="tw"></i><b class="th o"></b>Har...</span><i class="tg"></i></li>
          <li class="row"><svg class="eye"><use href="#eye"/></svg><i class="bar red"></i><span class="ct l1"><i class="tw"></i><b class="th o"></b>ko...</span><i class="tg"></i></li>
          <li class="row"><svg class="eye"><use href="#eye"/></svg><i class="bar red"></i><span class="ct l1"><i class="tw"></i><b class="th p"></b>ko...</span><i class="tg"></i></li>
          <li class="row"><svg class="eye"><use href="#eye"/></svg><i class="bar red"></i><span class="ct l1"><i class="tw"></i><b class="th o"></b>in den</span><i class="tg"></i></li>
          <li class="row"><svg class="eye"><use href="#eye"/></svg><i class="bar red"></i><span class="ct l1"><i class="tw"></i><b class="th p"></b>in den</span><i class="tg"></i></li>
          <li class="row"><svg class="eye"><use href="#eye"/></svg><i class="bar red"></i><span class="ct l1"><i class="tw"></i><b class="th o"></b>Gar...</span><i class="tg"></i></li>
          <li class="row"><svg class="eye"><use href="#eye"/></svg><i class="bar red"></i><span class="ct l1"><i class="tw"></i><b class="th p"></b>Gar...</span><i class="tg"></i></li>
          <li class="row"><svg class="eye"><use href="#eye"/></svg><i class="bar red"></i><span class="ct l1"><i class="tw"></i><b class="th o"></b>Nur...</span><i class="tg"></i></li>
          <li class="row"><svg class="eye"><use href="#eye"/></svg><i class="bar red"></i><span class="ct l1"><i class="tw"></i><b class="th p"></b>Nur...</span><i class="tg"></i></li>
          <li class="row"><svg class="eye"><use href="#eye"/></svg><i class="bar red"></i><span class="ct l1"><i class="tw"></i><b class="th p"></b>Har...</span><i class="tg"></i></li>
          <li class="row"><svg class="eye"><use href="#eye"/></svg><i class="bar red"></i><span class="ct l1"><i class="tw"></i><b class="th o"></b>Har...</span><i class="tg"></i></li>
          <li class="row"><svg class="eye"><use href="#eye"/></svg><i class="bar red"></i><span class="ct l1"><i class="tw"></i><b class="th o"></b>ko...</span><i class="tg"></i></li>
          <li class="row"><svg class="eye"><use href="#eye"/></svg><i class="bar red"></i><span class="ct l1"><i class="tw"></i><b class="th p"></b>ko...</span><i class="tg"></i></li>
          <li class="row"><svg class="eye"><use href="#eye"/></svg><i class="bar red"></i><span class="ct l1"><i class="tw"></i><b class="th o"></b>in den</span><i class="tg"></i></li>
          <li class="row"><svg class="eye"><use href="#eye"/></svg><i class="bar red"></i><span class="ct l1"><i class="tw"></i><b class="th p"></b>in den</span><i class="tg"></i></li>
          <li class="row"><svg class="eye"><use href="#eye"/></svg><i class="bar red"></i><span class="ct l1"><i class="tw"></i><b class="th o"></b>Gar...</span><i class="tg"></i></li>
          <li class="row"><svg class="eye"><use href="#eye"/></svg><i class="bar red"></i><span class="ct l1"><i class="tw"></i><b class="th p"></b>Gar...</span><i class="tg"></i></li>
          <li class="row"><svg class="eye"><use href="#eye"/></svg><i class="bar red"></i><span class="ct l1"><i class="tw"></i><b class="th o"></b>Nur...</span><i class="tg"></i></li>
          <li class="row"><svg class="eye"><use href="#eye"/></svg><i class="bar red"></i><span class="ct l1"><i class="tw"></i><b class="th p"></b>Nur...</span><i class="tg"></i></li>
          <li class="row"><svg class="eye"><use href="#eye"/></svg><i class="bar red"></i><span class="ct l1"><i class="tw"></i><b class="th p"></b>Har...</span><i class="tg"></i></li>
          <li class="row"><svg class="eye"><use href="#eye"/></svg><i class="bar red"></i><span class="ct l1"><i class="tw"></i><b class="th o"></b>Har...</span><i class="tg"></i></li>
          <li class="row"><svg class="eye"><use href="#eye"/></svg><i class="bar red"></i><span class="ct l1"><i class="tw"></i><b class="th o"></b>ko...</span><i class="tg"></i></li>
          <li class="row"><svg class="eye"><use href="#eye"/></svg><i class="bar red"></i><span class="ct l1"><i class="tw"></i><b class="th p"></b>ko...</span><i class="tg"></i></li>
          <li class="row"><svg class="eye"><use href="#eye"/></svg><i class="bar red"></i><span class="ct l1"><i class="tw"></i><b class="th o"></b>in den</span><i class="tg"></i></li>
          <li class="row"><svg class="eye"><use href="#eye"/></svg><i class="bar red"></i><span class="ct l1"><i class="tw"></i><b class="th p"></b>in den</span><i class="tg"></i></li>
          <li class="row"><svg class="eye"><use href="#eye"/></svg><i class="bar red"></i><span class="ct l1"><i class="tw"></i><b class="th o"></b>Gar...</span><i class="tg"></i></li>
          <li class="row"><svg class="eye"><use href="#eye"/></svg><i class="bar red"></i><span class="ct l1"><i class="tw"></i><b class="th p"></b>Gar...</span><i class="tg"></i></li>
          <li class="row"><svg class="eye"><use href="#eye"/></svg><i class="bar red"></i><span class="ct l1"><i class="tw"></i><b class="th o"></b>Nur...</span><i class="tg"></i></li>
          <li class="row"><svg class="eye"><use href="#eye"/></svg><i class="bar red"></i><span class="ct l1"><i class="tw"></i><b class="th p"></b>Nur...</span><i class="tg"></i></li>
          <li class="row"><svg class="eye"><use href="#eye"/></svg><i class="bar red"></i><span class="ct l1"><i class="tw"></i><b class="th p"></b>Har...</span><i class="tg"></i></li>
          <li class="row"><svg class="eye"><use href="#eye"/></svg><i class="bar red"></i><span class="ct l1"><i class="tw"></i><b class="th o"></b>Har...</span><i class="tg"></i></li>
        </ul>
        <div class="lscroll"><svg class="sa"><use href="#chev" transform="rotate(180 7 7)"/></svg><i class="lthumb"></i><svg class="sa sb"><use href="#chev"/></svg></div>
      </div>
      <div class="pfoot">
        <span class="count">6 E...</span>
        <svg class="fi f1" viewBox="0 0 22 22"><path d="M3 3h14v14H3z" fill="none" stroke="currentColor" stroke-width="1.400"/><path d="M1 1h4v4H1zM15 1h4v4h-4zM1 15h4v4H1z" fill="currentColor"/><path d="M13 13h8v9l-4-2-4 2z" fill="currentColor"/></svg>
        <svg class="fi dim" viewBox="0 0 22 22"><path d="M10 5H2v15h15v-8" fill="none" stroke="currentColor" stroke-width="1.600"/><path d="M7 14c1-5 5-8 10-8V2l5 6-5 5V9c-4 0-8 2-10 5z" fill="currentColor"/></svg>
        <svg class="fi dim" viewBox="0 0 22 22"><circle cx="9" cy="9" r="6.500" fill="none" stroke="currentColor" stroke-width="1.800"/><path d="M14 14l7 7" stroke="currentColor" stroke-width="2.400"/></svg>
        <svg class="fi" viewBox="0 0 22 22"><rect x="6" y="6" width="14" height="14" fill="none" stroke="currentColor" stroke-width="1.300"/><rect x="2" y="2" width="13" height="13" fill="currentColor"/></svg>
        <svg class="fi" viewBox="0 0 22 22"><path d="M8 6h14v14H8z" fill="none" stroke="currentColor" stroke-width="1.400"/><path d="M15 9v8M11 13h8M2 1v7h5M4.500 5.500L7 8 4.500 10.500" fill="none" stroke="currentColor" stroke-width="1.400"/></svg>
        <svg class="fi" viewBox="0 0 22 22"><rect x="2" y="2" width="18" height="18" fill="none" stroke="currentColor" stroke-width="1.400"/><path d="M11 7v8M7 11h8" stroke="currentColor" stroke-width="1.400"/></svg>
        <svg class="fi" viewBox="0 0 22 22"><path d="M2 4h18M8 4V1h6v3M4 4h14v17H4zM8 7v11M11 7v11M14 7v11" fill="none" stroke="currentColor" stroke-width="1.400"/></svg>
      </div>
    </aside>
  </div>
</main>
</body>
</html>
```

FILE: styles.css
```css
* { box-sizing: border-box; }
html, body { margin: 0; padding: 0; }
body { width: 2500px; height: 1584px; background: #fbfbfb; padding: 50px 74px 98px 73px; overflow: hidden; font-family: "Noto Sans", "Open Sans", sans-serif; color: #d4d4d4; }
.defs { position: absolute; width: 0; height: 0; }
button { font: inherit; color: inherit; border: 0; background: none; padding: 0; }
p { margin: 0; }
ul { margin: 0; padding: 0; list-style: none; }
i { display: block; font-style: normal; }

.win { width: 2353px; height: 1436px; background: #535353; border-radius: 9px 9px 2px 2px; box-shadow: 0 22px 62px rgba(0,0,0,.55), 0 0 18px rgba(0,0,0,.22); display: flex; flex-direction: column; overflow: hidden; }

/* title bar */
.title { height: 45px; flex: none; display: flex; align-items: center; background: #535353; border-bottom: 1px solid #3c3c3c; padding-left: 13px; }
.light { width: 15px; height: 15px; border-radius: 50%; margin-right: 11px; }
.light.red { background: #ee5f57; }
.light.yel { background: #f5b52e; }
.light.grn { background: #5ec545; }
.home { width: 24px; height: 22px; color: #c4c4c4; margin-left: 9px; }
.tdiv { width: 1px; height: 28px; background: #5d5d5d; margin-left: 16px; }
.apptitle { flex: 1; text-align: center; padding-left: 98px; font-size: 15.800px; color: #cfcfcf; }
.share { width: 101px; height: 31px; border-radius: 16px; background: #2f6fdc; color: #fff; font-size: 15.500px; font-weight: 500; }
.ticon { color: #c9c9c9; display: block; }
.search { width: 21px; height: 21px; margin-left: 15px; }
.tdiv2 { width: 1px; height: 26px; background: #5d5d5d; margin-left: 14px; }
.wide { width: 23px; height: 15px; margin-left: 23px; }
.wide2 { width: 22px; height: 17px; margin-left: 23px; margin-right: 13px; }

/* control bar */
.ctrl { height: 44px; flex: none; display: flex; align-items: center; padding-left: 20px; padding-right: 20px; background: #535353; border-bottom: 2px solid #484848; font-size: 13.300px; }
.lbl { white-space: nowrap; color: #d6d6d6; flex: none; }
.lbl.first { width: 92px; color: #cacaca; }
.lbl.uline { border-bottom: 1px dotted #ddd; line-height: 16px; color: #e8e8e8; font-weight: 500; }
.lbl.dim { color: #a2a2a2; }
.swatch { width: 25px; height: 25px; background: #fff; flex: none; }
.swatch.grey { background: #e2e2e2; }
.stroke-sw { background: linear-gradient(#000, #000) center / 4px 4px no-repeat, linear-gradient(#fff, #fff) center / 10px 10px no-repeat, #000; border: 1px solid #eee; }
.dd { height: 24px; background: #4c4c4c; display: flex; align-items: center; justify-content: center; color: #d9d9d9; flex: none; }
.dd svg { width: 12px; height: 12px; }
.field { height: 24px; background: #464646; display: flex; align-items: center; padding-left: 5px; color: #e2e2e2; flex: none; }
.stepper { width: 20px; height: 24px; display: flex; flex-direction: column; align-items: center; justify-content: center; background: #4c4c4c; color: #ccc; flex: none; }
.stepper svg { width: 12px; height: 10px; }
.stepper svg:first-child { transform: rotate(180deg); }
.light-dd { height: 25px; background: #e8e8e8; color: #1d1d1d; display: flex; align-items: center; padding-left: 8px; white-space: nowrap; flex: none; }
.pline { width: 42px; height: 2px; background: #000; margin-right: 6px; flex: none; }
.pdot { width: 7px; height: 7px; border-radius: 50%; background: #000; margin: 0 14px 0 3px; flex: none; }
.btn { height: 24px; border: 1px solid #6e6e6e; border-radius: 2px; color: #e3e3e3; text-align: center; flex: none; font-size: 13.300px; white-space: nowrap; }
.cicon { width: 20px; height: 20px; color: #bdbdbd; flex: none; }
.cicon.dimi { width: 17px; height: 15px; color: #727272; }
.cicon.right { margin-left: auto; }
.cicon.w18 { width: 18px; height: 16px; }
.cchev { width: 12px; height: 12px; color: #c8c8c8; flex: none; }
.cchev svg { width: 12px; height: 12px; display: block; }
.cchev.dimc { color: #737373; }
.m1 { margin-left: 1px; } .m2 { margin-left: 2px; } .m3 { margin-left: 3px; } .m4 { margin-left: 10px; } .m8 { margin-left: 8px; } .m9 { margin-left: 9px; } .m11 { margin-left: 11px; } .m16 { margin-left: 16px; } .m18 { margin-left: 18px; } .m24 { margin-left: 24px; } .m34 { margin-left: 34px; }
.w20 { width: 20px; } .w21 { width: 21px; } .w22 { width: 22px; } .w24 { width: 24px; } .w47 { width: 47px; } .w65 { width: 65px; } .w67 { width: 67px; } .w76 { width: 76px; } .w114 { width: 114px; } .w117 { width: 117px; } .w133 { width: 133px; } .w159 { width: 159px; }

/* work area */
.work { flex: 1; min-height: 0; display: flex; background: #3e3e3e; }
.head { height: 16px; background: #434343; color: #a9a9a9; font-size: 13px; line-height: 15px; padding-left: 9px; flex: none; }
.head.right-h { padding-left: 28px; }
.head.ph { text-align: right; padding-right: 8px; }
.grip { height: 6px; margin: 0 auto; width: 26px; background: repeating-linear-gradient(90deg, #7b7b7b 0 1px, transparent 1px 3px); flex: none; }

/* tools */
.tools { width: 95px; flex: none; background: #535353; margin-right: 2px; display: flex; flex-direction: column; color: #cfcfcf; }
.tools > .grip { margin-top: 5px; }
.tgrid { display: grid; grid-template-columns: repeat(2, 40px); grid-auto-rows: 31.300px; padding-left: 9px; margin-top: 16px; padding-bottom: 4px; border-bottom: 1px solid #5f5f5f; }
.tool { position: relative; display: flex; align-items: center; justify-content: center; }
.tool svg { width: 24px; height: 24px; }
.tool.fly::after { content: ""; position: absolute; right: 2px; bottom: 5px; border-style: solid; border-width: 0 0 5px 5px; border-color: transparent transparent #d4d4d4 transparent; }
.ttype { font-family: "DejaVu Serif", serif; font-weight: 700; font-size: 22px; }
.fs { position: relative; height: 78px; flex: none; margin-top: 5px; }
.fs-fill { position: absolute; left: 9px; top: 2px; width: 45px; height: 45px; background: #fff; border: 1px solid #888; }
.fs-stroke { position: absolute; left: 33px; top: 26px; width: 45px; height: 44px; background: #000; border: 1px solid #eee; }
.fs-stroke::after { content: ""; position: absolute; left: 10px; top: 10px; width: 24px; height: 22px; background: #535353; border: 1px solid #eee; }
.fs-swap { position: absolute; left: 68px; top: 4px; width: 15px; height: 14px; color: #d0d0d0; }
.fs-def { position: absolute; left: 11px; top: 54px; width: 11px; height: 11px; background: #fff; border: 1px solid #000; box-shadow: 4px 4px 0 -1px #000, 4px 4px 0 0 #ddd; }
.modes { display: flex; justify-content: center; gap: 2px; height: 24px; margin-top: 5px; flex: none; padding-left: 0; }
.mb { width: 24px; height: 24px; display: flex; align-items: center; justify-content: center; background: #4d4d4d; }
.mb.on { background: #3c3c3c; }
.mb svg { width: 17px; height: 17px; }
.mb.off { opacity: .35; }
.mw, .mg, .mn { width: 17px; height: 14px; border: 1px solid #000; }
.mw { background: #fff; }
.mg { background: linear-gradient(90deg, #111, #eee); }
.mn { background: linear-gradient(to top left, #fff 44%, #e8241b 44% 56%, #fff 56%); }
.modes.draw { margin-top: 8px; }
.screen { width: 30px; height: 22px; display: block; margin: 10px auto 0; flex: none; }
.more { text-align: center; font-size: 12px; line-height: 14px; letter-spacing: 2px; color: #c6c6c6; margin-top: 22px; }

/* doc */
.doc { width: 1883px; flex: none; display: flex; flex-direction: column; background: #3e3e3e; }
.tabbar { height: 38px; flex: none; padding: 3px 0 0 2px; background: #434343; }
.tab { width: 301px; height: 35px; background: #535353; color: #eee; font-size: 14px; font-weight: 600; line-height: 34px; display: flex; white-space: nowrap; }
.x { width: 32px; text-align: center; font-size: 17px; font-weight: 400; color: #ddd; flex: none; }
.docbody { flex: 1; min-height: 0; display: flex; }
.docmain { width: 1863px; flex: none; display: flex; flex-direction: column; }
.hruler { height: 23px; flex: none; display: flex; padding-left: 86px; background-color: #3a3a3a; background-image: repeating-linear-gradient(90deg, #8b8b8b 0 1px, transparent 1px 11.760px); background-size: 100% 4px; background-repeat: no-repeat; background-position: 0 100%; overflow: hidden; }
.hruler span { width: 117.600px; flex: none; border-left: 1px solid #7b7b7b; padding-left: 3px; font-size: 13.500px; line-height: 20px; color: #bdbdbd; }
.docrow { flex: 1; min-height: 0; display: flex; }
.vruler { width: 22px; flex: none; background-color: #3a3a3a; background-image: repeating-linear-gradient(180deg, #8b8b8b 0 1px, transparent 1px 11.770px); background-size: 5px 100%; background-repeat: no-repeat; background-position: 100% 0; overflow: hidden; border-left: 2px solid #474747; }
.vruler span { display: flex; justify-content: flex-end; align-items: center; height: 117.700px; border-bottom: 1px solid #7b7b7b; writing-mode: vertical-rl; font-size: 13.500px; line-height: 15px; color: #bdbdbd; padding-bottom: 11px; }
.canvas { flex: 1; min-width: 0; overflow: hidden; background: #5f5f5f; padding: 37px 0 0 48px; display: grid; grid-template-columns: repeat(3, 495px) 300px; column-gap: 49.500px; grid-auto-rows: 700px; row-gap: 67px; }
.spacer { display: block; }
.vscroll { width: 20px; flex: none; background: #4a4a4a; display: flex; flex-direction: column; align-items: center; color: #a8a8a8; }
.sa { width: 14px; height: 14px; flex: none; margin-top: 6px; }
.sb { margin-top: auto; margin-bottom: 5px; }
.vthumb { width: 14px; height: 32px; background: #6d6d6d; border-radius: 7px; margin-top: 369px; }
.status { height: 22px; flex: none; display: flex; align-items: center; background: #474747; font-size: 13.400px; color: #d8d8d8; padding-left: 3px; }
.sval { white-space: nowrap; }
.w-z { width: 68px; padding-left: 5px; }
.s-dd { width: 22px; height: 22px; background: #4c4c4c; }
.sfield { height: 22px; background: #414141; line-height: 22px; padding-left: 4px; flex: none; }
.w-a { width: 66px; margin-left: 3px; }
.w-n { width: 54px; margin-left: 8px; }
.nav { width: 12px; height: 14px; color: #b5b5b5; margin-left: 9px; flex: none; }
.first-n { margin-left: 18px; }
.stext { margin-left: 54px; width: 236px; white-space: nowrap; color: #c6c6c6; }
.m-sa { margin-left: 0; }
.hscroll { flex: 1; display: flex; align-items: center; margin-left: 9px; color: #a6a6a6; font-size: 16px; line-height: 16px; padding-right: 26px; }
.hthumb { width: 32px; height: 14px; border-radius: 7px; background: #6b6b6b; margin-left: 810px; margin-right: auto; }

/* artboards */
.ab { position: relative; width: 495px; height: 700px; background: #fff; padding: 68px 0 0 47px; box-shadow: 1px 1px 0 1px #9c9c9c, -1px 0 0 #ddd; white-space: nowrap; overflow: hidden; font-family: "Lato", sans-serif; color: #eea43a; }
.ab::after { content: ""; position: absolute; inset: 0; pointer-events: none; --g: linear-gradient(#72ee45, #72ee45); background: var(--g) 246px 0 / 2px 103px no-repeat, var(--g) 246px 595px / 2px 105px no-repeat, var(--g) 0 347px / 73px 2px no-repeat, var(--g) 100% 347px / 73px 2px no-repeat, var(--g) 246px 338px / 2px 21px no-repeat, var(--g) 237px 347px / 21px 2px no-repeat; }
.ab.active { box-shadow: 0 0 0 1px #000; }
.ab.shift { margin-left: 13px; }
.hd { font-family: "Inter", sans-serif; font-weight: 900; font-size: 36px; line-height: 37.500px; letter-spacing: 0; color: #e89b3e; -webkit-text-stroke: 1.200px #e89b3e; text-shadow: -1.500px 0 #eaa9b1; word-spacing: 8px; transform: scaleX(.945); transform-origin: 0 50%; }
.hd .pk { color: #e9adb5; -webkit-text-stroke-color: #e9adb5; text-shadow: none; }
.hd .in { padding-left: 3px; }
.q { margin-top: 10.500px; font-size: 9.600px; line-height: 12px; }
.q b { font-weight: 700; color: #ea960e; letter-spacing: .15px; }
.p2 { margin-top: 12px; font-size: 7.400px; line-height: 10px; letter-spacing: .05px; color: #ec9c1e; }
.p2 b { font-weight: 700; color: #ea960e; }
.ja { margin-top: 23.500px; font-family: "Liberation Serif", serif; font-style: italic; font-weight: 700; font-size: 12.200px; line-height: 15px; color: #eea9b8; }
.ach { margin-top: 7.500px; font-family: "Liberation Serif", serif; font-style: italic; font-size: 8.400px; line-height: 10px; color: #efb6c2; }
.imp { margin-top: 28px; font-size: 5.700px; line-height: 6.500px; color: #e5849a; }
.src { margin-top: 15.500px; font-size: 4.800px; line-height: 6px; color: #f0a400; }
.mk { margin-top: 27px; font-size: 8.200px; line-height: 12px; font-style: italic; color: #eda62a; }
.an { margin-top: 10.500px; font-size: 5.900px; line-height: 7px; color: #ee9c10; }
.pc { margin-top: 7.500px; font-size: 9.500px; line-height: 12px; font-style: italic; color: #f0b453; }
.ov { position: absolute; width: 10px; height: 10px; border: 1.500px solid #e0566a; border-radius: 2.500px; background: linear-gradient(#e0566a, #e0566a) center / 4px 1px no-repeat, linear-gradient(#e0566a, #e0566a) center / 1px 4px no-repeat, #fff; z-index: 1; }
.o1 { left: 235px; top: 411px; }
.o2 { left: 241px; top: 455px; }
.o3 { left: 178px; top: 498px; }
.o4 { left: 241px; top: 453px; }
.o5 { left: 240px; top: 339px; }
.o6 { left: 233px; top: 367px; }
.o7 { left: 241px; top: 445px; }

/* artboard variants */
.fb .ja { margin-top: 18px; font-family: "Inter", sans-serif; font-weight: 300; font-size: 11.800px; line-height: 14px; color: #f0bccb; }
.fb .ach { margin-top: 1px; font-family: "Inter", sans-serif; font-weight: 300; font-size: 8.300px; line-height: 10.500px; color: #f2c6d2; }
.fb .imp { margin-top: 15.500px; }
.fd .ja { line-height: 15.500px; font-family: "Open Sans", sans-serif; font-size: 10.800px; }
.fc .q, .fg .q { font-family: "Open Sans", sans-serif; font-size: 8.400px; line-height: 11.600px; margin-top: 14px; color: #ec9e33; }
.fc .q b, .fg .q b { letter-spacing: 0; }
.fc .p2 { font-family: "Open Sans", sans-serif; font-size: 6.600px; line-height: 10.500px; margin-top: 11px; }
.fc .ja, .fe .ja, .fg .ja { font-family: "Open Sans", sans-serif; font-style: italic; font-weight: 600; font-size: 12px; line-height: 14.500px; margin-top: 22px; color: #eea3b4; transform: scaleX(.79); transform-origin: 0 50%; }
.fc .ach, .fe .ach, .fg .ach { font-family: "Open Sans", sans-serif; font-style: italic; font-size: 8.400px; line-height: 10px; margin-top: 7px; color: #efb0be; transform: scaleX(.86); transform-origin: 0 50%; }
.fc .imp, .fe .imp, .fg .imp { margin-top: 26px; line-height: 7px; font-size: 5.500px; font-family: "Open Sans", sans-serif; }
.fc .src, .fe .src, .fg .src { margin-top: 16px; font-size: 4.600px; }
.fe .q { font-family: "Liberation Serif", serif; font-size: 9.500px; line-height: 12px; margin-top: 21px; color: #e8951f; }
.fe .p2 { font-family: "Liberation Serif", serif; font-size: 7.700px; line-height: 10.500px; margin-top: 13px; color: #ec9c1e; }
.fg .q { font-family: "DejaVu Serif", serif; font-size: 7.800px; margin-top: 11px; }
.fg .p2 { font-family: "DejaVu Serif", serif; font-size: 6.600px; line-height: 10.500px; margin-top: 13px; color: #eeb25e; }

/* dock */
.dock { width: 49px; flex: none; margin-left: 4px; margin-right: 4px; background: #3e3e3e; display: flex; flex-direction: column; color: #cfcfcf; }
.dgroup { background: #535353; display: flex; flex-direction: column; align-items: center; margin-bottom: 2px; padding-top: 5px; flex: none; gap: 12.500px; }
.dgroup .grip { margin-bottom: -4px; }
.g1 { height: 88px; }
.g2 { height: 125px; }
.g3 { height: 88px; }
.g4 { height: 52px; }
.dic { width: 24px; height: 24px; flex: none; }

/* layers panel */
.panel { width: 316px; flex: none; background: #535353; display: flex; flex-direction: column; }
.ph { background: #434343; }
.ptabs { height: 36px; flex: none; display: flex; align-items: center; background: #434343; font-size: 13px; font-weight: 600; color: #b9b9b9; padding-top: 1px; }
.ptab { width: 63px; height: 35px; line-height: 35px; padding-left: 12px; flex: none; overflow: hidden; white-space: nowrap; letter-spacing: .3px; border-right: 1px solid #4b4b4b; }
.ptab.on { width: 70px; background: #535353; color: #f1f1f1; }
.ptab.clip { width: 66px; padding-left: 12px; }
.pmenu { width: 14px; height: 10px; margin-left: 26px; color: #c9c9c9; flex: none; }
.psearch { height: 56.500px; flex: none; display: flex; align-items: center; padding-left: 17px; }
.sbox { width: 252px; height: 28px; border-radius: 2px; background: #434343; display: flex; align-items: center; padding-left: 6px; color: #d2d2d2; }
.sbox svg { width: 17px; height: 17px; flex: none; color: #c8c8c8; }
.sbox em { margin-left: 12px; font-size: 13.500px; white-space: nowrap; color: #d4d4d4; }
.filter { width: 18px; height: 20px; margin-left: 14px; color: #c4c4c4; }
.layers { flex: 1; min-height: 0; display: flex; padding-left: 8px; padding-right: 10px; }
.list { width: 284px; flex: none; }
.row { position: relative; height: 27.500px; display: flex; align-items: stretch; border-bottom: 1px solid #5a5a5a; font-size: 13.800px; color: #dadada; background: linear-gradient(#5a5a5a, #5a5a5a) 26px 0 / 1px 100% no-repeat, linear-gradient(#5a5a5a, #5a5a5a) 236px 0 / 1px 100% no-repeat; }
.row.sel { background: #4f6684; }
.row.sel::after { content: ""; position: absolute; right: 0; top: 0; border-style: solid; border-width: 8px 8px 0 0; border-color: #d8d8d8 transparent transparent transparent; transform: scaleX(-1); }
.eye { width: 26px; height: 14px; flex: none; margin-top: 6px; color: #cfcfcf; }
.bar { width: 4.500px; margin-left: 30px; flex: none; margin-bottom: 1px; }
.bar.grey { background: #7d7d7d; }
.bar.blk { background: #000; }
.bar.org { background: #e8651a; }
.bar.mag { background: #e34be0; }
.bar.brn { background: #9c3a10; }
.bar.pur { background: #8a2be2; }
.bar.red { background: #a50f0f; }
.ct { flex: 1; display: flex; align-items: center; white-space: nowrap; min-width: 0; }
.l0 { padding-left: 5px; }
.l1 { padding-left: 36px; }
.l2 { padding-left: 65px; }
.tw { width: 20px; height: 14px; flex: none; margin-right: 9px; color: #d4d4d4; }
.th { position: relative; width: 23px; height: 23px; background: #fff; border: 1.500px solid #000; flex: none; margin-right: 7px; margin-bottom: 1px; }
.th.o::after, .th.p::after { content: ""; position: absolute; left: 1px; right: 1px; top: 8px; height: 4px; background: repeating-linear-gradient(90deg, #f09a1a 0 3px, #fff 3px 4px); }
.th.p::after { background: repeating-linear-gradient(90deg, #ef9fb5 0 3px, #fff 3px 4px); }
.th.m::after { content: ""; position: absolute; left: 2px; top: 3px; width: 15px; height: 15px; background: linear-gradient(#f1c28f, #f1c28f) 0 2px / 13px 1px no-repeat, linear-gradient(#efb3ad, #efb3ad) 0 6px / 8px 1px no-repeat, linear-gradient(#f1c28f, #f1c28f) 6px 13px / 9px 1px no-repeat; }
.tg { width: 11px; height: 11px; border-radius: 50%; border: 1.500px solid #bdbdbd; flex: none; align-self: center; margin-right: 29px; margin-bottom: 1px; }
.lscroll { width: 14px; flex: none; background: #4a4a4a; display: flex; flex-direction: column; align-items: center; color: #a2a2a2; }
.lscroll .sa { margin-top: 0; height: 12px; }
.lscroll .sb { margin-bottom: 1px; margin-top: auto; }
.lthumb { width: 10px; height: 268px; background: #5e5e5e; border-radius: 5px; margin-top: 2px; }
.pfoot { height: 27.500px; flex: none; display: flex; align-items: center; font-size: 13.500px; color: #cdcdcd; padding-left: 7px; }
.count { width: 52px; white-space: nowrap; flex: none; letter-spacing: .5px; }
.fi { width: 20px; height: 20px; margin-right: 14px; flex: none; color: #c4c4c4; }
.fi.dim { color: #6d6d6d; }
```
